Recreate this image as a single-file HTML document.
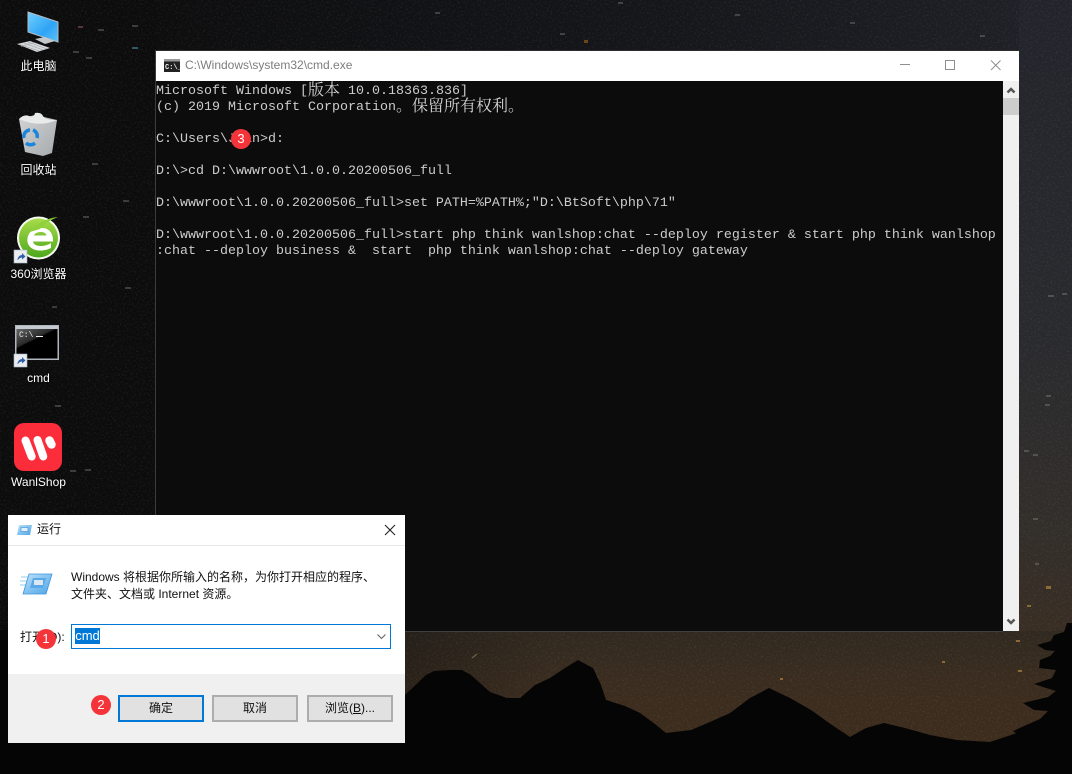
<!DOCTYPE html>
<html><head><meta charset="utf-8">
<style>
html,body{margin:0;padding:0;background:#0b0b0c}
#root{position:relative;width:1072px;height:774px;overflow:hidden;font-family:"Liberation Sans","Noto Sans CJK SC",sans-serif}
.abs{position:absolute}
.lbl{position:absolute;left:0;width:77px;text-align:center;color:#fff;font-size:12px;line-height:16px;white-space:nowrap;text-shadow:0 0 2px #000}
.c{position:absolute;left:156px;margin:0;color:#cccccc;font:13.334px/16px "Liberation Mono","Noto Serif CJK SC",monospace;white-space:pre;height:16px}
.c span{font:400 16px/0 "Noto Serif CJK SC",serif;color:#d4d4d4;position:relative;top:1px}
.badge{position:absolute;width:20px;height:20px;border-radius:50%;background:#f5343a;color:#fff;font-size:13px;line-height:20px;text-align:center}
.btn{position:absolute;top:695px;width:86px;height:27px;box-sizing:border-box;border:2px solid #adadad;background:#e1e1e1;color:#111;font-size:12px;line-height:23px;text-align:center}
</style></head><body>
<div id="root">
<svg class="abs" style="left:0;top:0" width="1072" height="774" viewBox="0 0 1072 774">
<defs>
<linearGradient id="sky" x1="0" y1="631" x2="0" y2="745" gradientUnits="userSpaceOnUse">
<stop offset="0" stop-color="#30291f"/><stop offset=".45" stop-color="#3a2c1f"/><stop offset="1" stop-color="#3d2c1c"/>
</linearGradient>
<linearGradient id="rt" x1="156" y1="0" x2="1072" y2="0" gradientUnits="userSpaceOnUse">
<stop offset="0" stop-color="#0d0d0e"/><stop offset=".55" stop-color="#14161a"/><stop offset=".92" stop-color="#1d1f25"/><stop offset="1" stop-color="#24262e"/>
</linearGradient>
<linearGradient id="rv" x1="0" y1="0" x2="0" y2="1">
<stop offset="0" stop-color="#22242b"/><stop offset=".5" stop-color="#292a2e"/><stop offset=".8" stop-color="#322e2a"/><stop offset="1" stop-color="#3a2d21"/>
</linearGradient>
<linearGradient id="lf" x1="0" y1="0" x2="1" y2="0">
<stop offset="0" stop-color="#121110"/><stop offset="1" stop-color="#121110" stop-opacity="0"/>
</linearGradient>
<filter id="sp" x="0" y="0" width="100%" height="100%">
<feTurbulence type="fractalNoise" baseFrequency=".55" numOctaves="2" seed="7"/>
<feColorMatrix type="matrix" values="0 0 0 0 .75  0 0 0 0 .75  0 0 0 0 .75  1.6 0 0 0 -.78"/>
</filter>
<linearGradient id="scr" x1="0" y1="0" x2="1" y2="1"><stop offset="0" stop-color="#6fd0ff"/><stop offset=".6" stop-color="#2fa4f5"/><stop offset="1" stop-color="#5cc2fb"/></linearGradient>
<linearGradient id="bin" x1="0" y1="0" x2="1" y2="1"><stop offset="0" stop-color="#d2d4d5"/><stop offset="1" stop-color="#a6aaac"/></linearGradient>
<linearGradient id="gr" x1="0" y1="0" x2="0" y2="1"><stop offset="0" stop-color="#a8dc4a"/><stop offset="1" stop-color="#4ea81c"/></linearGradient>
<linearGradient id="cm" x1="0" y1="0" x2="1" y2="1"><stop offset="0" stop-color="#666"/><stop offset=".45" stop-color="#2a2a2a"/><stop offset=".5" stop-color="#000"/></linearGradient>
<linearGradient id="ru" x1="0" y1="0" x2="1" y2="1"><stop offset="0" stop-color="#bfe3fa"/><stop offset="1" stop-color="#4aa3e6"/></linearGradient>
</defs>
<rect width="1072" height="774" fill="#0c0c0d"/>
<rect x="156" width="916" height="51" fill="url(#rt)"/>
<rect x="1019" width="53" height="660" fill="url(#rv)"/>
<rect x="405" y="631" width="667" height="120" fill="url(#sky)"/>
<rect x="405" y="631" width="150" height="110" fill="url(#lf)" opacity=".4"/>
<rect width="1072" height="774" filter="url(#sp)" opacity=".14"/>
<g fill="#a9a9a0" opacity=".3">
<rect x="78" y="26" width="5" height="2"/><rect x="132" y="25" width="6" height="2"/><rect x="98" y="29" width="6" height="2"/><rect x="73" y="51" width="6" height="2"/><rect x="86" y="57" width="6" height="2"/><rect x="92" y="163" width="6" height="2"/><rect x="83" y="216" width="6" height="2"/><rect x="123" y="200" width="6" height="2"/><rect x="52" y="306" width="5" height="2"/><rect x="125" y="287" width="6" height="2"/><rect x="55" y="405" width="6" height="2"/><rect x="70" y="470" width="6" height="2"/><rect x="85" y="469" width="6" height="2"/>
<rect x="435" y="12" width="5" height="2"/><rect x="618" y="2" width="5" height="2"/><rect x="735" y="14" width="5" height="2"/><rect x="560" y="33" width="5" height="2"/><rect x="850" y="22" width="5" height="2"/><rect x="980" y="35" width="5" height="2"/><rect x="1048" y="295" width="6" height="2"/><rect x="1062" y="293" width="5" height="2"/><rect x="1045" y="404" width="5" height="2"/><rect x="1024" y="450" width="5" height="2"/><rect x="1046" y="395" width="5" height="2"/><rect x="1033" y="454" width="5" height="2"/><rect x="1033" y="518" width="5" height="2"/><rect x="1035" y="563" width="4" height="2"/>
</g>
<g fill="#b08540" opacity=".7">
<rect x="1046" y="586" width="5" height="3"/><rect x="1027" y="605" width="4" height="2"/><rect x="1016" y="640" width="4" height="2"/><rect x="1018" y="670" width="4" height="2"/><rect x="942" y="661" width="3" height="2"/><rect x="780" y="678" width="3" height="2"/><path d="M472 658L477 654" stroke="#9c8a5a" stroke-width="1"/>
</g>
<rect x="78" y="26" width="5" height="2" fill="#5b3540"/><rect x="132" y="47" width="6" height="2" fill="#2f5a68"/><rect x="584" y="40" width="4" height="3" fill="#6b4618"/>
<polygon fill="#060505" points="405,774 405,695 426,675 434,671 451,670 462,670 471,675 490,692 507,698 520,698 535,685 550,678 565,668 578,660 593,668 601,685 606,700 625,706 640,713 655,724 666,733 691,730 710,722 730,713 750,698 769,688 790,698 811,710 832,725 850,737 866,728 884,723 905,728 930,735 957,740 990,742 1017,733 1072,730 1072,774"/>
<rect x="0" y="743" width="410" height="31" fill="#060505"/>
<rect x="0" y="630" width="8" height="144" fill="#060505"/>
<path fill="#060505" d="M1072 623H1067L1064 632L1054 635L1051 641L1037 645L1045 650L1055 651L1050 656L1040 660L1039 668L1056 670L1052 678L1034 684L1046 688L1056 691L1048 697L1023 703L1034 710L1048 711L1040 719L1013 731L1025 740L1072 742Z"/>
<rect x="155" y="50" width="864" height="1" fill="#2c2c2c"/>
<rect x="155" y="50" width="1" height="582" fill="#3c3c3c"/>
<rect x="405" y="631" width="598" height="1" fill="#3f3f3f"/>
<g font-size="0">
<polygon points="28,12 58,22 58,42 28,32" fill="url(#scr)" stroke="#b4bcc4" stroke-width="1"/>
<polygon points="35,39 45,37 55,41 45,44" fill="#c4c8cb"/>
<polygon points="17,44 30,41 50,48 37,52" fill="#d8dadc"/>
<path d="M20 44.500L39 51M24 43L43 50M28 42L47 49M21 46.500L34 42.500" stroke="#9aa0a4" stroke-width=".6"/>
<polygon points="19,119 35,115 57,120 52,153 43,156 25,152" fill="url(#bin)"/>
<path d="M19 119q5-5 10-3t6-3q6-1 8 3t14 4q-18 8-38-1z" fill="#e9eaea"/>
<g fill="none" stroke="#1c85dc" stroke-width="3.500"><path d="M24 138a6.500 6.500 0 0 1 6-8"/><path d="M33 130a6.500 6.500 0 0 1 4 8"/><path d="M35 143a6.500 6.500 0 0 1-9 0"/></g>
<circle cx="38.500" cy="238" r="21.500" fill="#f6fbef"/>
<circle cx="38.500" cy="238" r="19.500" fill="url(#gr)"/>
<path d="M42 228c-9 0-13.500 4-14.500 10.500c-1 7 4.500 12 12.500 12c4.500 0 8-1 11-2.500v-5c-3 2-6.500 3-10.500 3c-4.500 0-7-1.800-7.500-4.500H53c.5-8-4-13.500-11-13.500zM34 235.500c.7-2.500 4-3.500 7-3.500s5 1.200 5.500 3.500z" fill="#fff"/>
<path d="M30 232Q40 219 58 217Q47 221 40 229Z" fill="#8fd13a"/>
<rect x="14" y="250" width="13" height="13" fill="#e9edf2" stroke="#aeb6c0" stroke-width=".6"/>
<path d="M17.500 260.500q0-5 4.500-5.500v-2l3.500 3.500l-3.500 3v-2q-2.500 0-4.500 3z" fill="#2f5fa8"/>
<rect x="15.750" y="325.750" width="42.500" height="33.500" fill="#000" stroke="#b0b6bd" stroke-width="1.500"/>
<rect x="16" y="326" width="42" height="3" fill="#c5cad0"/>
<path d="M16.500 329H57.500V334Q36 337 16.500 349Z" fill="url(#cm)"/>
<text x="19" y="337" fill="#eee" font-family="Liberation Mono" font-size="8">C:\</text>
<rect x="36" y="336" width="7" height="1" fill="#eee"/>
<rect x="14" y="354" width="13" height="13" fill="#e9edf2" stroke="#aeb6c0" stroke-width=".6"/>
<path d="M17.500 364.500q0-5 4.500-5.500v-2l3.500 3.500l-3.500 3v-2q-2.500 0-4.500 3z" fill="#2f5fa8"/>
<rect x="14" y="423" width="48" height="48" rx="10" fill="#fb2d3a"/>
<path d="M25.500 440.500L31.700 456.500" stroke="#fff" stroke-width="8" stroke-linecap="round"/>
<path d="M37.500 440L43.300 456.500" stroke="#fff" stroke-width="8" stroke-linecap="round"/>
<path d="M49.500 440.500L51.500 444.500" stroke="#fff" stroke-width="8.500" stroke-linecap="round"/>
</g>
</svg>

<div class="lbl" style="top:58px">此电脑</div>
<div class="lbl" style="top:162px">回收站</div>
<div class="lbl" style="top:266px">360浏览器</div>
<div class="lbl" style="top:370px">cmd</div>
<div class="lbl" style="top:474px">WanlShop</div>

<!-- cmd window -->
<div class="abs" style="left:156px;top:51px;width:863px;height:580px;background:#0c0c0c"></div>
<div class="abs" style="left:156px;top:51px;width:863px;height:30px;background:#fff"></div>
<svg class="abs" style="left:164px;top:59px" width="16" height="13"><rect width="16" height="13" fill="#222"/><rect y="0" width="16" height="2.500" fill="#9a9a9a"/><text x="1" y="10" fill="#eee" font-family="Liberation Mono" font-size="7" font-weight="700">C:\_</text></svg>
<div class="abs" style="left:185px;top:57px;font-size:12px;line-height:16px;color:#7d7d7d;white-space:nowrap">C:\Windows\system32\cmd.exe</div>
<svg class="abs" style="left:900px;top:51px" width="119" height="30">
<rect x="0" y="13" width="10" height="1" fill="#8f8f8f"/>
<rect x="45.500" y="9.500" width="9" height="9" fill="none" stroke="#8f8f8f"/>
<path d="M91 9.500L100.500 19M100.500 9.500L91 19" stroke="#8f8f8f" fill="none"/>
</svg>
<div class="abs" style="left:1003px;top:81px;width:16px;height:550px;background:#f0f0f0"></div>
<div class="abs" style="left:1003px;top:98px;width:16px;height:17px;background:#cdcdcd"></div>
<svg class="abs" style="left:1003px;top:81px" width="16" height="550">
<path d="M4.500 11.500L8 8L11.500 11.500" fill="none" stroke="#555" stroke-width="2.500"/>
<path d="M4.500 538.500L8 542L11.500 538.500" fill="none" stroke="#555" stroke-width="2.500"/>
</svg>

<pre class="c" style="top:84px">Microsoft Windows [<span>版本</span> 10.0.18363.836]</pre>
<pre class="c" style="top:100px">(c) 2019 Microsoft Corporation<span>。保留所有权利。</span></pre>
<pre class="c" style="top:132px">C:\Users\Jian&gt;d:</pre>
<pre class="c" style="top:164px">D:\&gt;cd D:\wwwroot\1.0.0.20200506_full</pre>
<pre class="c" style="top:196px">D:\wwwroot\1.0.0.20200506_full&gt;set PATH=%PATH%;"D:\BtSoft\php\71"</pre>
<pre class="c" style="top:228px">D:\wwwroot\1.0.0.20200506_full&gt;start php think wanlshop:chat --deploy register &amp; start php think wanlshop</pre>
<pre class="c" style="top:244px">:chat --deploy business &amp;  start  php think wanlshop:chat --deploy gateway</pre>
<div class="badge" style="left:231px;top:129px">3</div>

<!-- run dialog -->
<div class="abs" style="left:8px;top:515px;width:397px;height:228px;background:#fff"></div>
<div class="abs" style="left:8px;top:545px;width:397px;height:1px;background:#e8e8e8"></div>
<div class="abs" style="left:8px;top:674px;width:397px;height:69px;background:#f0f0f0"></div>
<svg class="abs" style="left:16px;top:523px" width="18" height="14"><polygon points="3,2 16,2 14,12 1,12" fill="url(#ru)"/><rect x="5" y="4.500" width="7" height="4" fill="#dff0fb" stroke="#4a96d6" stroke-width=".7"/></svg>
<div class="abs" style="left:37px;top:521px;font-size:12px;line-height:16px;color:#111">运行</div>
<svg class="abs" style="left:384px;top:524px" width="12" height="12"><path d="M1 1L11 11M11 1L1 11" stroke="#222" stroke-width="1.100"/></svg>
<svg class="abs" style="left:19px;top:572px" width="34" height="24">
<path d="M2 5H9M1 9H8M1 13H7" stroke="#a9d6f5" stroke-width="1.300"/>
<polygon points="10,2 33,2 27,22 4,22" fill="url(#ru)" stroke="#3d94de" stroke-width=".8"/>
<polygon points="14,6 27,6 24,16 11,16" fill="#5aa8e6"/>
<rect x="15" y="8" width="9" height="5" fill="#dbe7f1"/>
</svg>
<div class="abs" style="left:71px;top:569px;font-size:12px;line-height:17px;color:#111;white-space:pre">Windows 将根据你所输入的名称，为你打开相应的程序、
文件夹、文档或 Internet 资源。</div>
<div class="abs" style="left:20px;top:629px;font-size:12px;line-height:16px;color:#111;white-space:nowrap">打开(O):</div>
<div class="abs" style="left:71px;top:624px;width:320px;height:25px;box-sizing:border-box;border:1px solid #0078d7;background:#fff"></div>
<div class="abs" style="left:75px;top:628px;width:25px;height:16px;background:#0078d7;color:#fff;font-size:13px;line-height:16px;text-align:center">cmd</div>
<svg class="abs" style="left:376px;top:632px" width="12" height="10"><path d="M1.500 2.500L5.500 6.500L9.500 2.500" fill="none" stroke="#666" stroke-width="1.100"/></svg>
<div class="badge" style="left:36px;top:629px">1</div>
<div class="btn" style="left:118px;border-color:#0078d7">确定</div>
<div class="btn" style="left:212px">取消</div>
<div class="btn" style="left:307px">浏览(<u>B</u>)...</div>
<div class="badge" style="left:91px;top:695px">2</div>
</div>
</body></html>
